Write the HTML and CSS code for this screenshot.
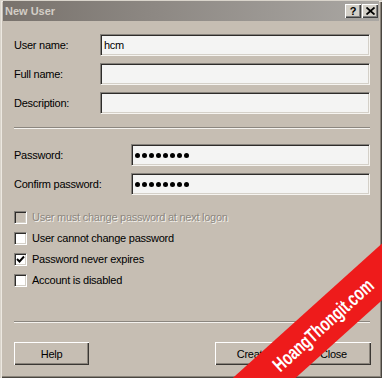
FILE: index.html
```html
<!DOCTYPE html>
<html>
<head>
<meta charset="utf-8">
<link rel="stylesheet" href="styles.css">
</head>
<body>
<div class="window">
  <div class="titlebar">
    <span class="title">New User</span>
    <div class="tb-buttons">
      <span class="tb-btn">?</span>
      <span class="tb-btn close">
        <svg width="9" height="8" viewBox="0 0 9 8"><path d="M0.5 0.5 L8.5 7.5 M8.5 0.5 L0.5 7.5" stroke="#000" stroke-width="1.8"/></svg>
      </span>
    </div>
  </div>
  <div class="content">
    <div class="form-grid">
      <label class="lbl">User name:</label>
      <div class="field">hcm</div>
      <label class="lbl">Full name:</label>
      <div class="field"></div>
      <label class="lbl">Description:</label>
      <div class="field"></div>
    </div>
    <div class="sep sep1"></div>
    <div class="form-grid pw">
      <label class="lbl">Password:</label>
      <div class="field dots"><i></i><i></i><i></i><i></i><i></i><i></i><i></i><i></i></div>
      <label class="lbl">Confirm password:</label>
      <div class="field dots"><i></i><i></i><i></i><i></i><i></i><i></i><i></i><i></i></div>
    </div>
    <div class="checks">
      <div class="chk disabled"><span class="box"></span><span class="ctext">User must change password at next logon</span></div>
      <div class="chk"><span class="box"></span><span class="ctext">User cannot change password</span></div>
      <div class="chk"><span class="box"><svg width="9" height="9" viewBox="0 0 9 9"><path d="M1 4 L3.5 6.5 L8 1.5" fill="none" stroke="#000" stroke-width="1.9"/></svg></span><span class="ctext">Password never expires</span></div>
      <div class="chk"><span class="box"></span><span class="ctext">Account is disabled</span></div>
    </div>
    <div class="sep sep2"></div>
    <div class="buttons">
      <button class="btn">Help</button>
      <div class="right-btns">
        <button class="btn">Create</button>
        <button class="btn">Close</button>
      </div>
    </div>
  </div>
  <div class="wm-clip">
    <div class="watermark"><span>HoangThongit.com</span></div>
  </div>
</div>
</body>
</html>
```

FILE: styles.css
```css
html, body {
  margin: 0;
  padding: 0;
}
body {
  width: 382px;
  height: 378px;
  overflow: hidden;
  font-family: "Liberation Sans", Arial, sans-serif;
  font-size: 11px;
  letter-spacing: -0.25px;
  color: #000;
}
.window {
  position: relative;
  overflow: hidden;
  box-sizing: border-box;
  width: 382px;
  height: 378px;
  background: #c6beb3;
  padding: 1px 3px 3px 3px;
  box-shadow: inset 1px 1px 0 #d9d4cb, inset 2px 2px 0 #ece8e1, inset -1px -1px 0 #4a4640, inset -2px -2px 0 #8a847b;
}
.titlebar {
  height: 20px;
  display: flex;
  align-items: center;
  justify-content: space-between;
  padding: 0 1px 0 2px;
  background: linear-gradient(to right, #78726c, #8d8883 40%, #aaa7a3);
}
.title {
  font-weight: bold;
  color: #d3cec6;
  letter-spacing: 0;
  font-size: 11px;
}
.tb-buttons {
  display: flex;
  gap: 1px;
}
.tb-btn {
  box-sizing: border-box;
  width: 16px;
  height: 14px;
  background: #d4d0c8;
  box-shadow: inset 1px 1px 0 #fff, inset -1px -1px 0 #404040, inset -2px -2px 0 #808080;
  display: flex;
  align-items: center;
  justify-content: center;
  font-weight: bold;
  font-size: 11px;
  letter-spacing: 0;
  line-height: 14px;
}
.content {
  padding: 13px 9px 0 11px;
}
.form-grid {
  display: grid;
  grid-template-columns: 86px 1fr;
  grid-auto-rows: 22px;
  row-gap: 7px;
  align-items: center;
}
.form-grid.pw {
  grid-template-columns: 117px 1fr;
  margin-top: 15px;
}
.lbl {
  display: block;
}
.field {
  box-sizing: border-box;
  height: 22px;
  background: #f4f4f3;
  border-top: 1px solid #85817b;
  border-left: 1px solid #85817b;
  border-right: 1px solid #f6f4f0;
  border-bottom: 1px solid #f6f4f0;
  box-shadow: inset 1px 1px 0 #2e2c2a, inset -1px -1px 0 #d4d0c8;
  padding: 0 0 0 3px;
  display: flex;
  align-items: center;
  font-size: 11px;
}
.dots {
  gap: 2px;
  padding-left: 3px;
}
.dots i {
  display: block;
  width: 5px;
  height: 5px;
  border-radius: 50%;
  background: #000;
}
.sep {
  height: 1px;
  background: #8b867f;
  border-bottom: 1px solid #f4f2ee;
}
.sep1 {
  margin-top: 13px;
}
.checks {
  margin-top: 16px;
  display: flex;
  flex-direction: column;
  gap: 8px;
}
.chk {
  display: flex;
  align-items: center;
  height: 13px;
  gap: 5px;
}
.box {
  box-sizing: border-box;
  width: 13px;
  height: 13px;
  background: #fff;
  border-top: 1px solid #85817b;
  border-left: 1px solid #85817b;
  border-right: 1px solid #fff;
  border-bottom: 1px solid #fff;
  box-shadow: inset 1px 1px 0 #2e2c2a, inset -1px -1px 0 #d4d0c8;
  display: flex;
  align-items: center;
  justify-content: center;
}
.chk.disabled .box {
  background: #c6beb3;
}
.ctext {
  line-height: 13px;
}
.chk.disabled .ctext {
  color: #8c877f;
  text-shadow: 1px 1px 0 #f4f2ee;
}
.sep2 {
  margin-top: 34px;
}
.buttons {
  margin-top: 19px;
  display: flex;
  justify-content: space-between;
}
.right-btns {
  display: flex;
  gap: 6px;
  margin-right: -1px;
}
.btn {
  box-sizing: border-box;
  width: 75px;
  height: 23px;
  margin: 0;
  padding: 0;
  border: none;
  background: #c6beb3;
  font-family: "Liberation Sans", Arial, sans-serif;
  font-size: 11px;
  letter-spacing: -0.25px;
  color: #000;
  box-shadow: inset 1px 1px 0 #fff, inset -1px -1px 0 #3a3733, inset -2px -2px 0 #8a847b;
}
.wm-clip {
  position: absolute;
  left: 0;
  top: 0;
  width: 382px;
  height: 378px;
  overflow: hidden;
  pointer-events: none;
}
.watermark {
  position: absolute;
  left: 193px;
  top: 304px;
  width: 260px;
  height: 42px;
  background: #ee1b1b;
  transform: rotate(-42deg);
  display: flex;
  align-items: center;
  justify-content: center;
}
.watermark span {
  display: block;
  color: #fff;
  font-family: "Liberation Sans", Arial, sans-serif;
  font-weight: bold;
  font-size: 20px;
  letter-spacing: 0;
  transform: scaleX(0.7);
  white-space: nowrap;
}
```
